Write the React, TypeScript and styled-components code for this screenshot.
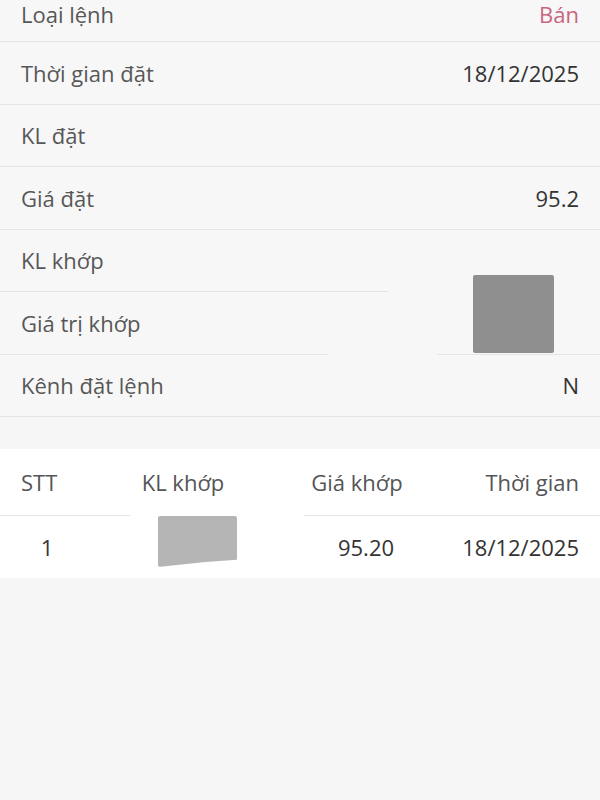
import styled, { createGlobalStyle } from 'styled-components';

const GlobalStyle = createGlobalStyle`
  html, body {
    margin: 0;
    padding: 0;
    background: #f6f6f6;
    font-family: 'Open Sans', 'Noto Sans', sans-serif;
  }
  * { box-sizing: border-box; }
`;

const details = [
  { label: 'Loại lệnh', value: 'Bán', tone: 'sell' },
  { label: 'Thời gian đặt', value: '18/12/2025' },
  { label: 'KL đặt', value: '' },
  { label: 'Giá đặt', value: '95.2' },
  { label: 'KL khớp', value: '' },
  { label: 'Giá trị khớp', value: '' },
  { label: 'Kênh đặt lệnh', value: 'N' },
];

const matches = [{ stt: '1', volume: '', price: '95.20', time: '18/12/2025' }];

export default function App() {
  return (
    <>
      <GlobalStyle />
      <Page>
        <DetailList>
          {details.map((d, i) => (
            <DetailRow key={d.label} $first={i === 0}>
              <Label>{d.label}</Label>
              <Value $tone={d.tone}>{d.value}</Value>
            </DetailRow>
          ))}
          {/* redacted area from the original screenshot */}
          <Mask style={{ left: 388, top: 289, width: 212, height: 6 }} />
          <Mask style={{ left: 328, top: 352, width: 109, height: 6 }} />
          <Redacted $shade="#8f8f8f" style={{ left: 473, top: 275, width: 81, height: 78 }} />
        </DetailList>

        <MatchTable>
          <TableHead>
            <HeadCell $align="left">STT</HeadCell>
            <HeadCell $align="center">KL khớp</HeadCell>
            <HeadCell $align="center">Giá khớp</HeadCell>
            <HeadCell $align="right">Thời gian</HeadCell>
          </TableHead>
          {matches.map((m) => (
            <TableRow key={m.stt}>
              <Cell $align="center">{m.stt}</Cell>
              <Cell $align="center">{m.volume}</Cell>
              <Cell $align="center" $shift={18}>{m.price}</Cell>
              <Cell $align="right">{m.time}</Cell>
            </TableRow>
          ))}
          <Mask $light style={{ left: 130, top: 64, width: 174, height: 6 }} />
          <Redacted $shade="#b5b5b5" $slant style={{ left: 158, top: 67, width: 79, height: 51 }} />
        </MatchTable>
      </Page>
    </>
  );
}

const Page = styled.div`
  width: 600px;
  height: 800px;
  overflow: hidden;
  background: #f6f6f6;
  color: #333;
`;

const DetailList = styled.section`
  position: relative;
  background: #f7f7f7;
`;

const DetailRow = styled.div<{ $first?: boolean }>`
  display: flex;
  align-items: center;
  justify-content: space-between;
  height: ${({ $first }) => ($first ? '42px' : '62.5px')};
  padding: ${({ $first }) => ($first ? '0 21px 14px' : '0 21px')};
  border-bottom: 1.5px solid #e4e4e4;
  font-size: 22px;
`;

const Label = styled.span`
  color: #575757;
`;

const Value = styled.span<{ $tone?: string }>`
  color: ${({ $tone }) => ($tone === 'sell' ? '#c9657f' : '#333')};
`;

const Mask = styled.div<{ $light?: boolean }>`
  position: absolute;
  background: ${({ $light }) => ($light ? '#ffffff' : '#f7f7f7')};
`;

const Redacted = styled.div<{ $shade: string; $slant?: boolean }>`
  position: absolute;
  background: ${({ $shade }) => $shade};
  border-radius: 2px;
  clip-path: ${({ $slant }) =>
    $slant ? 'polygon(0 0, 100% 0, 100% 86%, 60% 90%, 0 100%)' : 'none'};
`;

const MatchTable = styled.section`
  position: relative;
  margin-top: 32px;
  background: #fff;
`;

const columns = '52px 220px 128px 1fr';

const TableHead = styled.div`
  display: grid;
  grid-template-columns: ${columns};
  align-items: center;
  height: 67px;
  padding: 0 21px;
  border-bottom: 1.5px solid #e6e6e6;
  font-size: 22px;
  color: #555;
`;

const TableRow = styled.div`
  display: grid;
  grid-template-columns: ${columns};
  align-items: center;
  height: 62px;
  padding: 0 21px;
  font-size: 22px;
  color: #333;
`;

const HeadCell = styled.span<{ $align: string }>`
  text-align: ${({ $align }) => $align};
`;

const Cell = styled.span<{ $align: string; $shift?: number }>`
  text-align: ${({ $align }) => $align};
  padding-left: ${({ $shift }) => ($shift ? `${$shift}px` : '0')};
`;
